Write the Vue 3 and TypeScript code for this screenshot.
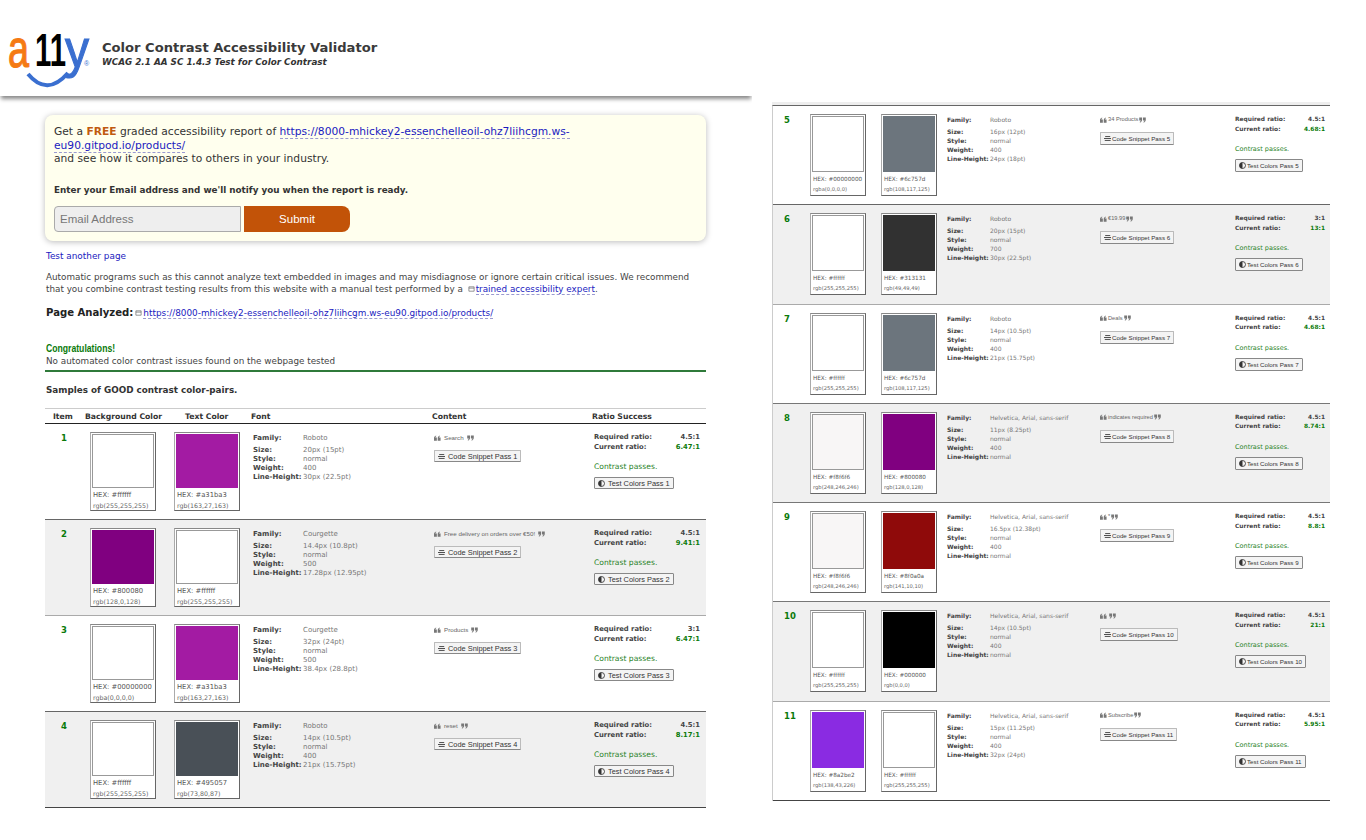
<script setup lang="ts">
type Swatch = { color: string; hex: string; rgb: string };
type Pair = {
  id: number;
  bg: Swatch;
  fg: Swatch;
  family: string;
  size: string;
  weight: string;
  lineHeight: string;
  content: string;
  required: string;
  current: string;
};

const white: Swatch = { color: "#ffffff", hex: "#ffffff", rgb: "rgb(255,255,255)" };
const clear: Swatch = { color: "#ffffff", hex: "#00000000", rgb: "rgba(0,0,0,0)" };
const offWhite: Swatch = { color: "#f8f6f6", hex: "#f8f6f6", rgb: "rgb(248,246,246)" };
const magenta: Swatch = { color: "#a31ba3", hex: "#a31ba3", rgb: "rgb(163,27,163)" };
const purple: Swatch = { color: "#800080", hex: "#800080", rgb: "rgb(128,0,128)" };
const slate: Swatch = { color: "#6c757d", hex: "#6c757d", rgb: "rgb(108,117,125)" };

const helvetica = "Helvetica, Arial, sans-serif";

const leftPairs: Pair[] = [
  { id: 1, bg: white, fg: magenta, family: "Roboto", size: "20px (15pt)", weight: "400", lineHeight: "30px (22.5pt)", content: "Search", required: "4.5:1", current: "6.47:1" },
  { id: 2, bg: purple, fg: white, family: "Courgette", size: "14.4px (10.8pt)", weight: "500", lineHeight: "17.28px (12.95pt)", content: "Free delivery on orders over €50!", required: "4.5:1", current: "9.41:1" },
  { id: 3, bg: clear, fg: magenta, family: "Courgette", size: "32px (24pt)", weight: "500", lineHeight: "38.4px (28.8pt)", content: "Products", required: "3:1", current: "6.47:1" },
  { id: 4, bg: white, fg: { color: "#495057", hex: "#495057", rgb: "rgb(73,80,87)" }, family: "Roboto", size: "14px (10.5pt)", weight: "400", lineHeight: "21px (15.75pt)", content: "reset", required: "4.5:1", current: "8.17:1" },
];

const rightPairs: Pair[] = [
  { id: 5, bg: clear, fg: slate, family: "Roboto", size: "16px (12pt)", weight: "400", lineHeight: "24px (18pt)", content: "34 Products", required: "4.5:1", current: "4.68:1" },
  { id: 6, bg: white, fg: { color: "#313131", hex: "#313131", rgb: "rgb(49,49,49)" }, family: "Roboto", size: "20px (15pt)", weight: "700", lineHeight: "30px (22.5pt)", content: "€19.99", required: "3:1", current: "13:1" },
  { id: 7, bg: white, fg: slate, family: "Roboto", size: "14px (10.5pt)", weight: "400", lineHeight: "21px (15.75pt)", content: "Deals", required: "4.5:1", current: "4.68:1" },
  { id: 8, bg: offWhite, fg: purple, family: helvetica, size: "11px (8.25pt)", weight: "400", lineHeight: "normal", content: "indicates required", required: "4.5:1", current: "8.74:1" },
  { id: 9, bg: offWhite, fg: { color: "#8f0a0a", hex: "#8f0a0a", rgb: "rgb(141,10,10)" }, family: helvetica, size: "16.5px (12.38pt)", weight: "400", lineHeight: "normal", content: "*", required: "4.5:1", current: "8.8:1" },
  { id: 10, bg: white, fg: { color: "#000000", hex: "#000000", rgb: "rgb(0,0,0)" }, family: helvetica, size: "14px (10.5pt)", weight: "400", lineHeight: "normal", content: "", required: "4.5:1", current: "21:1" },
  { id: 11, bg: { color: "#8a2be2", hex: "#8a2be2", rgb: "rgb(138,43,226)" }, fg: white, family: helvetica, size: "15px (11.25pt)", weight: "400", lineHeight: "32px (24pt)", content: "Subscribe", required: "4.5:1", current: "5.95:1" },
];

const tables = [
  { name: "left", pairs: leftPairs, showHead: true },
  { name: "right", pairs: rightPairs, showHead: false },
];

const pageUrl = "https://8000-mhickey2-essenchelleoil-ohz7liihcgm.ws-eu90.gitpod.io/products/";

const swatches = (pair: Pair) => [pair.bg, pair.fg];
const isLight = (s: Swatch) => s.color === "#ffffff" || s.color === "#f8f6f6";
</script>

<template>
  <div class="page">
    <section class="col-left">
      <header class="site-header">
        <svg class="logo" viewBox="0 0 92 90" width="92" height="90" role="img" aria-label="a11y">
          <text x="8" y="67" class="logo-a" textLength="21" lengthAdjust="spacingAndGlyphs">a</text>
          <text x="35" y="66" class="logo-one" textLength="31" lengthAdjust="spacingAndGlyphs">11</text>
          <text x="65" y="67" class="logo-y" textLength="24" lengthAdjust="spacingAndGlyphs">y</text>
          <path d="M28 74 Q47 97 68 73" fill="none" stroke="#3a6fd0" stroke-width="4" />
          <text x="84" y="66" class="logo-r">®</text>
        </svg>
        <div class="titles">
          <h1>Color Contrast Accessibility Validator</h1>
          <p>WCAG 2.1 AA SC 1.4.3 Test for Color Contrast</p>
        </div>
      </header>

      <div class="content">
        <div class="callout">
          <p class="callout-lead">
            Get a <strong>FREE</strong> graded accessibility report of
            <a href="#">{{ pageUrl }}</a><br />
            and see how it compares to others in your industry.
          </p>
          <p class="callout-ask">Enter your Email address and we'll notify you when the report is ready.</p>
          <form class="signup" @submit.prevent>
            <input type="text" placeholder="Email Address" />
            <button type="submit">Submit</button>
          </form>
        </div>

        <a href="#" class="another">Test another page</a>
        <p class="disclaimer">
          Automatic programs such as this cannot analyze text embedded in images and may misdiagnose or ignore certain
          critical issues. We recommend that you combine contrast testing results from this website with a manual test
          performed by a
          <svg class="ext" viewBox="0 0 8 8"><path d="M1 1.5h6v5H1zM1 3h6" fill="none" stroke="#555" stroke-width=".7" /></svg>
          <a href="#">trained accessibility expert</a>.
        </p>
        <p class="analyzed">
          <b>Page Analyzed:</b>
          <svg class="ext" viewBox="0 0 8 8"><path d="M1 1.5h6v5H1zM1 3h6" fill="none" stroke="#555" stroke-width=".7" /></svg>
          <a href="#">{{ pageUrl }}</a>
        </p>
        <h2 class="congrats">Congratulations!</h2>
        <p class="no-issues">No automated color contrast issues found on the webpage tested</p>
        <h3 class="samples">Samples of GOOD contrast color-pairs.</h3>
      </div>
    </section>

    <section v-for="table in tables" :key="table.name" :class="['table', `table--${table.name}`]">
      <div v-if="table.showHead" class="row row--head">
        <span class="head-item">Item</span>
        <span class="head-bg">Background Color</span>
        <span class="head-fg">Text Color</span>
        <span class="head-shift">Font</span>
        <span class="head-shift">Content</span>
        <span class="head-shift">Ratio Success</span>
      </div>
      <div v-for="pair in table.pairs" :key="pair.id" :class="['row', { 'row--alt': pair.id % 2 === 0 }]">
        <div class="num">{{ pair.id }}</div>
        <div v-for="(s, i) in swatches(pair)" :key="i" class="card">
          <div :class="['chip', { 'chip--light': isLight(s) }]" :style="{ background: s.color }"></div>
          <div class="hex">HEX: {{ s.hex }}</div>
          <div class="rgb">{{ s.rgb }}</div>
        </div>
        <dl class="font">
          <div class="font-family"><dt>Family:</dt><dd>{{ pair.family }}</dd></div>
          <div><dt>Size:</dt><dd>{{ pair.size }}</dd></div>
          <div><dt>Style:</dt><dd>normal</dd></div>
          <div><dt>Weight:</dt><dd>{{ pair.weight }}</dd></div>
          <div><dt>Line-Height:</dt><dd>{{ pair.lineHeight }}</dd></div>
        </dl>
        <div class="sample">
          <div class="quote">
            <svg class="q" viewBox="0 0 16 12"><path d="M0 12V6.500C0 3 2 1 5 0v2C3.700 2.600 3 3.500 3 5h3.500v7zM8.500 12V6.500C8.500 3 10.500 1 13.500 0v2C12.200 2.600 11.500 3.500 11.500 5H15v7z" /></svg>
            <span>{{ pair.content }}</span>
            <svg class="q" viewBox="0 0 16 12"><path d="M7 0v5.500C7 9 5 11 2 12v-2C3.300 9.400 4 8.500 4 7H.5V0zM15.500 0v5.500c0 3.500-2 5.500-5 6.500v-2c1.300-.6 2-1.500 2-3H9V0z" /></svg>
          </div>
          <button class="btn btn--code" type="button">
            <svg class="ico" viewBox="0 0 9 7"><path d="M1.500 1H8M0 3.500h9M1 6h7.500" fill="none" stroke="currentColor" stroke-width="1.100" /></svg>
            Code Snippet Pass {{ pair.id }}
          </button>
        </div>
        <div class="ratio">
          <div class="ratio-line"><b>Required ratio:</b><b>{{ pair.required }}</b></div>
          <div class="ratio-line"><b>Current ratio:</b><b class="good">{{ pair.current }}</b></div>
          <p class="passes">Contrast passes.</p>
          <button class="btn btn--test" type="button">
            <svg class="ico" viewBox="0 0 10 10"><circle cx="5" cy="5" r="4.300" fill="none" stroke="currentColor" stroke-width="1.200" /><path d="M5 .7a4.300 4.300 0 0 0 0 8.600z" fill="currentColor" /></svg>
            Test Colors Pass {{ pair.id }}
          </button>
        </div>
      </div>
    </section>
  </div>
</template>

<style>
html,
body {
  background: #fff;
}
</style>

<style scoped>
.page {
  display: grid;
  grid-template-columns: 752px 1fr;
  grid-template-rows: 408px 1fr;
  width: 1366px;
  height: 840px;
  overflow: hidden;
  font-family: "DejaVu Sans", sans-serif;
  color: #333;
}

.col-left {
  grid-column: 1;
  grid-row: 1;
}

.site-header {
  height: 96px;
  display: flex;
  align-items: flex-start;
  background: #fff;
  box-shadow: 0 4px 4px -1px #8a8a8a;
  clip-path: inset(0 0 -12px 0);
}

.logo {
  flex: none;
  margin-right: 10px;
}
.logo text {
  font-family: "Liberation Sans", sans-serif;
}
.logo-a {
  font-size: 54px;
  fill: #f57a14;
  stroke: #f57a14;
  stroke-width: 1.200px;
}
.logo-one {
  font-size: 47px;
  font-weight: 700;
  fill: #000;
}
.logo-y {
  font-size: 54px;
  fill: #3a6fd0;
  stroke: #3a6fd0;
  stroke-width: 1.200px;
}
.logo .logo-r {
  font-size: 7px;
  fill: #3a6fd0;
}

.titles {
  padding-top: 40px;
}
.titles h1 {
  margin: 0;
  font-size: 13.100px;
  line-height: 16px;
  color: #3a3a3a;
}
.titles p {
  margin: 0;
  font-size: 8.800px;
  line-height: 12px;
  font-weight: 700;
  font-style: italic;
  color: #333;
}

.content {
  padding: 19px 46px 0 45px;
}

a {
  color: #1a1ac0;
  text-decoration: none;
}

.callout {
  height: 126px;
  box-sizing: border-box;
  padding: 10px 9px 0;
  background: #ffffee;
  border-radius: 8px;
  box-shadow: 0 1px 6px #bbb;
  font-size: 10.700px;
  line-height: 13.500px;
}
.callout p {
  margin: 0;
}
.callout strong {
  color: #c05a10;
}
.callout a {
  border-bottom: 1px dashed #9a9ad0;
}
.callout-ask {
  padding-top: 18px;
  font-size: 8.800px;
  font-weight: 700;
}
.signup {
  margin-top: 9px;
  display: flex;
  gap: 3px;
}
.signup input {
  width: 187px;
  height: 26px;
  box-sizing: border-box;
  padding: 0 5px;
  border: 1px solid #aaa;
  border-radius: 4px 0 0 4px;
  background: #eee;
  font-family: "Liberation Sans", sans-serif;
  font-size: 11.500px;
}
.signup input::placeholder {
  color: #777;
}
.signup button {
  width: 106px;
  height: 26px;
  border: 0;
  border-radius: 0 8px 8px 0;
  background: #c25308;
  color: #fff;
  font-family: "Liberation Sans", sans-serif;
  font-size: 11.500px;
}

.another {
  display: block;
  margin: 9px 0 0 1px;
  font-size: 8.900px;
  line-height: 12px;
  width: max-content;
}
.disclaimer {
  margin: 10px 0 0 1px;
  font-size: 8.800px;
  line-height: 11.500px;
  color: #444;
}
.disclaimer a,
.analyzed a {
  border-bottom: 1px dashed #9a9ad0;
}
.ext {
  width: 7px;
  height: 8px;
  margin: 0 1px 0 2px;
  vertical-align: -1px;
}
.analyzed {
  margin: 11px 0 0 1px;
  font-size: 8.900px;
  line-height: 14px;
}
.analyzed b {
  font-size: 10.100px;
  color: #222;
}
.congrats {
  margin: 22px 0 0 1px;
  width: max-content;
  font-family: "Liberation Sans", sans-serif;
  font-size: 10.800px;
  line-height: 13px;
  color: #0a7a0a;
  transform: scaleX(0.8);
  transform-origin: left;
}
.no-issues {
  margin: 0;
  padding: 0 0 2px 1px;
  font-size: 8.800px;
  line-height: 13px;
  color: #444;
  border-bottom: 2px solid #2f7a3a;
}
.samples {
  margin: 12px 0 0 1px;
  font-size: 8.800px;
  line-height: 12px;
  color: #333;
}

.table {
  align-self: start;
  box-sizing: border-box;
}
.table--left {
  grid-column: 1;
  grid-row: 2;
  margin-left: 45px;
  width: 661px;
  --cols: 45px 84px 79px 181px 160px 1fr;
  --row-h: 96px;
  --card-w: 66px;
  --card-h: 79px;
  --chip-h: 54px;
  --pad-top: 8px;
  --font-size: 7px;
  --font-pad: 2px;
  --label-w: 50px;
  --hex-size: 6.800px;
  --rgb-size: 6.300px;
  --quote-size: 6.200px;
  --quote-gap: 3px;
  --btn-size: 7.400px;
  --btn-h: 12px;
  --btn-gap: 3px;
  --ratio-size: 6.800px;
  --pass-size: 7.600px;
}
.table--right {
  grid-column: 2;
  grid-row: 1 / 3;
  margin: 105px 0 0 20px;
  width: 558px;
  border-left: 1px solid #ccc;
  border-top: 1px solid #666;
  box-shadow: 0 -3px 0 #eee;
  --cols: 37px 71px 66px 153px 135px 1fr;
  --row-h: 99.250px;
  --card-w: 56px;
  --card-h: 82px;
  --chip-h: 56px;
  --pad-top: 8px;
  --font-size: 6px;
  --font-pad: 1px;
  --label-w: 43px;
  --hex-size: 5.700px;
  --rgb-size: 5.200px;
  --quote-size: 5.700px;
  --quote-gap: 1px;
  --btn-size: 6.200px;
  --btn-h: 13px;
  --btn-gap: 1px;
  --ratio-size: 5.900px;
  --pass-size: 6.500px;
}

.row {
  display: grid;
  grid-template-columns: var(--cols);
  height: var(--row-h);
  box-sizing: border-box;
  padding-top: var(--pad-top);
  border-bottom: 1px solid #666;
  background: #fff;
  font-size: 8px;
  line-height: 9px;
}
.row--alt {
  background: #f0f0f0;
  border-bottom-color: #aaa;
}
.row:last-child {
  border-bottom-color: #444;
}
.table--right .row:nth-child(3),
.table--right .row:nth-child(4),
.table--right .row:nth-child(5) {
  border-bottom-color: #777;
}

.row--head {
  height: 16px;
  padding-top: 2px;
  border-top: 1px solid #ccc;
  border-bottom: 1px solid #222;
  font-size: 7.700px;
  line-height: 12px;
  font-weight: 700;
}
.head-item {
  padding-left: 8px;
}
.head-bg {
  margin-left: -5px;
  white-space: nowrap;
}
.head-fg {
  padding-left: 11px;
  white-space: nowrap;
}
.head-shift {
  margin-left: -2px;
}

.num {
  padding: 2px 0 0 16px;
  font-weight: 700;
  color: #0a7a0a;
  font-size: 8.500px;
}
.table--right .num {
  padding-left: 11px;
}

.card {
  width: var(--card-w);
  height: var(--card-h);
  box-sizing: border-box;
  padding: 1px;
  background: #fff;
  border: 1px solid #666;
  border-left-color: #aaa;
  border-top-color: #888;
}
.chip {
  height: var(--chip-h);
  box-sizing: border-box;
}
.chip--light {
  border: 1px solid #999;
}
.hex {
  padding: 3px 0 0 1px;
  font-size: var(--hex-size);
  line-height: 9px;
  color: #555;
  white-space: nowrap;
}
.rgb {
  padding: 1px 0 0 1px;
  font-size: var(--rgb-size);
  line-height: 9px;
  color: #666;
  white-space: nowrap;
}

.font {
  margin: 0;
  padding-top: var(--font-pad);
  font-size: var(--font-size);
}
.font > div {
  display: flex;
}
.font dt {
  flex: 0 0 var(--label-w);
  font-weight: 700;
  color: #444;
  white-space: nowrap;
}
.font dd {
  margin: 0;
  color: #777;
  white-space: nowrap;
}
.font-family {
  margin-bottom: 3px;
}

.sample {
  padding-top: 1px;
}
.quote {
  display: flex;
  align-items: center;
  gap: var(--quote-gap);
  height: 9px;
  font-family: "Liberation Sans", sans-serif;
  font-size: var(--quote-size);
  color: #666;
}
.q {
  flex: none;
  width: 7px;
  height: 6px;
  fill: #777;
}

.btn {
  display: flex;
  align-items: center;
  gap: var(--btn-gap);
  width: max-content;
  height: var(--btn-h);
  padding: 0 3px;
  box-sizing: border-box;
  border: 1px solid #bbb;
  border-bottom-color: #888;
  border-radius: 1px;
  background: #f4f4f4;
  color: #333;
  font-family: "Liberation Sans", sans-serif;
  font-size: var(--btn-size);
  white-space: nowrap;
}
.btn--code {
  margin-top: 8px;
}
.btn--test {
  margin-top: 5px;
  border-color: #888;
}
.ico {
  flex: none;
  width: 7px;
  height: 7px;
}

.ratio {
  padding-top: 1px;
  padding-right: 6px;
}
.table--right .ratio {
  padding-right: 5px;
}
.ratio-line {
  display: flex;
  justify-content: space-between;
  height: 9.500px;
  font-size: var(--ratio-size);
  color: #444;
}
.good {
  color: #0a7a0a;
}
.passes {
  margin: 10px 0 0;
  font-size: var(--pass-size);
  line-height: 10px;
  color: #2a842a;
}
</style>
